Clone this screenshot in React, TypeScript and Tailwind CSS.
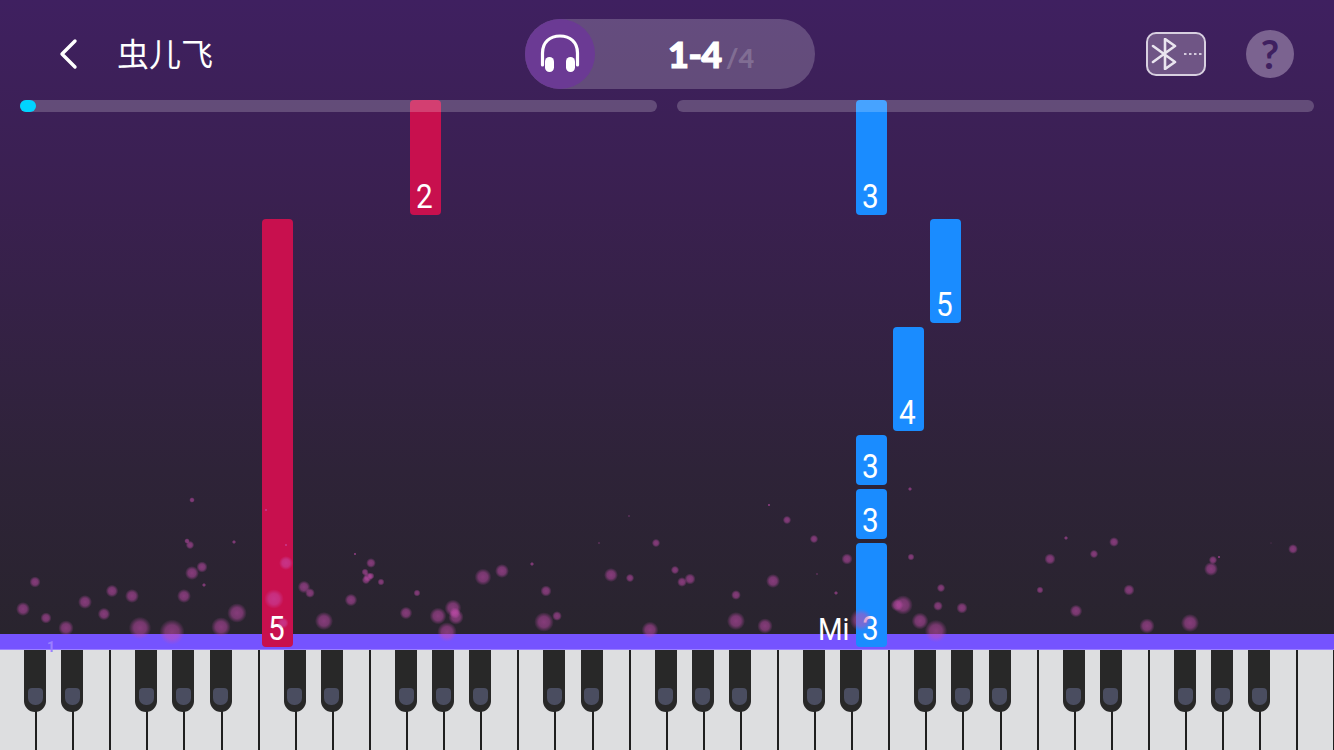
const BLACK_KEY_GAPS = [3, 7, 10, 14, 17, 21, 24, 28, 31, 35, 36];

// x, y, r of the glow specks rising from the keyboard
const SPECKS: [number, number, number][] = [
  [23, 609, 5], [46, 618, 4], [66, 628, 5.5], [35, 582, 4], [85, 602, 5], [112, 591, 4.5], [104, 614, 4.5],
  [132, 596, 5], [140, 628, 8], [172, 632, 9], [184, 596, 5], [192, 573, 5], [202, 567, 4], [204, 585, 1.5],
  [190, 545, 3], [187, 541, 2], [192, 500, 2], [234, 542, 1.5], [237, 613, 7], [221, 627, 7], [286, 563, 5],
  [274, 599, 7], [283, 623, 4], [286, 545, 1], [266, 510, 1], [304, 587, 4.5], [310, 593, 3.5], [351, 600, 4.5],
  [324, 621, 6.5], [371, 563, 3.5], [365, 572, 2.5], [368, 577, 3.5], [371, 576, 2.5], [366, 580, 3], [381, 582, 2.5],
  [355, 554, 1], [406, 613, 4.5], [417, 593, 2.5], [483, 577, 6], [502, 571, 5], [532, 564, 1.5], [546, 591, 4],
  [557, 616, 3.5], [544, 622, 7], [453, 608, 6], [455, 613, 4], [456, 617, 5.5], [438, 616, 6], [447, 632, 7],
  [611, 575, 5], [630, 578, 3], [656, 543, 3], [675, 570, 3], [682, 582, 3.5], [690, 579, 4], [650, 630, 6],
  [736, 595, 3.5], [736, 621, 6.5], [765, 626, 5.5], [773, 581, 5], [787, 520, 3], [814, 539, 3], [769, 505, 1],
  [629, 516, 0.7], [599, 543, 0.7], [817, 574, 0.7], [836, 593, 1.5], [847, 559, 4], [911, 557, 2.5], [885, 558, 0.6],
  [941, 588, 3], [938, 606, 3.5], [962, 608, 4], [897, 605, 4.5], [903, 605, 7], [920, 621, 6], [936, 631, 8],
  [861, 620, 8], [1066, 538, 1.5], [1114, 542, 3.5], [1050, 559, 4], [1094, 554, 3], [1040, 590, 2.5], [1129, 590, 4],
  [1076, 611, 4.5], [1147, 626, 5.5], [1190, 623, 6.5], [1211, 569, 5], [1213, 560, 3], [1219, 557, 1], [1293, 549, 3.5],
  [1271, 543, 0.6], [1286, 555, 0.4], [910, 489, 1.5],
];

function Note({ x, y, h, color, digit }: { x: number; y: number; h: number; color: string; digit: string }) {
  return (
    <div
      className="absolute z-10 w-[31px] rounded-[4px] flex items-end justify-center font-['Roboto',sans-serif] text-[33px] leading-[36px] text-white"
      style={{ left: x, top: y, height: h, backgroundColor: color }}
    >
      <span className="block scale-x-[0.9] -translate-x-[1px]">{digit}</span>
    </div>
  );
}

function Keyboard() {
  return (
    <div className="flex h-[100px] bg-[#dddee0]">
      {Array.from({ length: 36 }, (_, i) => (
        <div key={i} className="relative shrink-0 w-[37.1px] border-r-2 border-[#1f1f1f]">
          {!BLACK_KEY_GAPS.includes(i + 1) && (
            <div className="absolute z-10 top-0 right-[-11px] w-[22px] h-[62px] rounded-b-[11px] bg-[#282828] flex justify-center items-end pb-[7px]">
              <div className="w-[15px] h-[17px] rounded-t-[4px] rounded-b-[7px] bg-[#4a4d60]" />
            </div>
          )}
        </div>
      ))}
    </div>
  );
}

export default function App() {
  return (
    <div className="relative w-[1334px] h-[750px] overflow-hidden flex flex-col bg-[linear-gradient(to_bottom,#3f2060_0px,#3a2050_200px,#2e2338_470px,#29242e_634px)]">
      <header className="h-[100px] pt-[8px] pl-[56px] pr-[40px] flex items-center">
        <div className="w-[469px] flex items-center">
          <svg width="24" height="32" viewBox="0 0 24 32" fill="none">
            <path d="M19 3 L6 16 L19 29" stroke="#fff" strokeWidth="3.4" strokeLinecap="round" strokeLinejoin="round" />
          </svg>
          <span className="ml-[37px] mb-[5px] text-[32px] leading-none text-white font-['Noto_Sans_CJK_SC',sans-serif]">虫儿飞</span>
        </div>
        <div className="w-[290px] h-[70px] rounded-full bg-white/20 flex items-center">
          <div className="w-[70px] h-[70px] rounded-full bg-[#6b3a94] flex items-center justify-center">
            <svg width="44" height="44" viewBox="0 0 44 44" fill="none">
              <path d="M4.5 33 V21 C4.5 10 12 4 22 4 C32 4 39.5 10 39.5 21 V33" stroke="#fff" strokeWidth="3.2" strokeLinecap="round" />
              <rect x="7" y="25" width="9" height="15" rx="4.5" fill="#fff" />
              <rect x="28" y="25" width="9" height="15" rx="4.5" fill="#fff" />
            </svg>
          </div>
          <div className="ml-[73px] flex items-baseline font-['Lato',sans-serif] font-black">
            <span className="text-[36px] leading-none text-white tracking-[-0.5px] [-webkit-text-stroke:1.2px_#fff]">1-4</span>
            <span className="ml-[4px] text-[27px] leading-none text-white/20">/4</span>
          </div>
        </div>
        <div className="ml-auto flex items-center gap-[40px]">
          <div className="w-[60px] h-[44px] rounded-[10px] border-2 border-[#d8d0e0] bg-[#6f5585] flex items-center pl-[3px]">
            <svg width="52" height="32" viewBox="0 0 52 32" fill="none">
              <path d="M2 8 L24 24 L14 31 V1 L24 8 L2 24" stroke="#eae5ef" strokeWidth="2.6" strokeLinejoin="round" strokeLinecap="round" />
              <path d="M33 16 H51" stroke="#d4cadd" strokeWidth="2" strokeDasharray="2.5 2.5" />
            </svg>
          </div>
          <div className="w-[48px] h-[48px] rounded-full bg-[#7b6390] flex items-center justify-center font-['Lato',sans-serif] font-bold text-[40px] leading-none text-[#3f2060]">
            ?
          </div>
        </div>
      </header>

      <div className="relative z-20 h-[12px] px-[20px] flex gap-[20px]">
        <div className="flex-1 rounded-full bg-white/20">
          <div className="w-[16px] h-[12px] rounded-full bg-[#00d4ff]" />
        </div>
        <div className="flex-1 rounded-full bg-white/20" />
      </div>

      <div className="flex-1" />

      <Note x={262} y={219} h={428} color="#c8104e" digit="5" />
      <Note x={410} y={100} h={115} color="#c8104e" digit="2" />
      <Note x={856} y={100} h={115} color="#1a8cff" digit="3" />
      <Note x={930} y={219} h={104} color="#1a8cff" digit="5" />
      <Note x={893} y={327} h={104} color="#1a8cff" digit="4" />
      <Note x={856} y={435} h={50} color="#1a8cff" digit="3" />
      <Note x={856} y={489} h={50} color="#1a8cff" digit="3" />
      <Note x={856} y={543} h={104} color="#1a8cff" digit="3" />
      <span className="absolute z-10 left-[818px] top-[611px] origin-left scale-x-[0.88] text-[32px] leading-[36px] text-white font-['Roboto',sans-serif]">Mi</span>

      <svg className="absolute z-10 inset-0 pointer-events-none" width="1334" height="650" viewBox="0 0 1334 650">
        <defs>
          <radialGradient id="speck">
            <stop offset="0" stopColor="#c84db0" stopOpacity="0.58" />
            <stop offset="0.55" stopColor="#c84db0" stopOpacity="0.48" />
            <stop offset="1" stopColor="#c84db0" stopOpacity="0" />
          </radialGradient>
        </defs>
        {SPECKS.map(([x, y, r], i) => (
          <circle key={i} cx={x} cy={y} r={r * 1.4} fill="url(#speck)" />
        ))}
      </svg>

      <div className="relative h-[16px] bg-[#7553ff] border-b border-[#9a80ff]">
        <span className="absolute left-[47px] top-[6px] text-[14px] leading-[14px] font-bold text-[#9a80ff] font-['Roboto',sans-serif]">1</span>
      </div>
      <Keyboard />
    </div>
  );
}
